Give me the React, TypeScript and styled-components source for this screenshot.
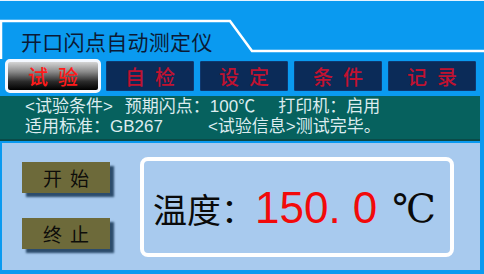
import React from "react";
import styled, { createGlobalStyle } from "styled-components";

const GlobalStyle = createGlobalStyle`
  body {
    margin: 0;
    background: #0a9af0;
  }
`;

const CJK = `"Noto Sans CJK SC", "DejaVu Sans", sans-serif`;

const Screen = styled.div`
  width: 484px;
  height: 274px;
  overflow: hidden;
  background: #0a9af0;
  border-top: 1px solid #e6f3ff;
  box-sizing: border-box;
  font-family: ${CJK};
  display: flex;
  flex-direction: column;
`;

const Header = styled.div`
  position: relative;
  height: 58px;
  padding: 26px 0 0 21px;
  box-sizing: border-box;
`;

const TabLine = styled.svg`
  position: absolute;
  left: 0;
  top: 0;
  pointer-events: none;
`;

const Title = styled.div`
  position: relative;
  font-size: 21px;
  line-height: 28px;
  color: #0b1a36;
  letter-spacing: 0.3px;
`;

const NavRow = styled.div`
  display: flex;
  align-items: center;
  gap: 5px;
  height: 34px;
  padding-left: 5px;
`;

const NavButton = styled.div<{ $active?: boolean }>`
  box-sizing: border-box;
  height: ${(p) => (p.$active ? "34px" : "30px")};
  width: ${(p) => (p.$active ? "96px" : "88px")};
  margin-right: ${(p) => (p.$active ? "0" : "1px")};
  display: flex;
  align-items: center;
  justify-content: center;
  font-size: 20px;
  font-weight: 500;
  letter-spacing: 10px;
  padding-left: 10px;
  color: ${(p) => (p.$active ? "#ff1a1a" : "#c01230")};
  background: ${(p) =>
    p.$active
      ? "linear-gradient(180deg, #d4d4d4 0%, #8a8a8a 35%, #2a2a2a 70%, #000 100%)"
      : "#0b2b58"};
  border: ${(p) => (p.$active ? "3px solid #f4f8ff" : "1px solid #0e3870")};
  border-radius: ${(p) => (p.$active ? "5px" : "1px")};
`;

const InfoBand = styled.div`
  margin-top: 3px;
  width: 480px;
  height: 45px;
  box-sizing: border-box;
  background: #06615e;
  border-bottom: 2px solid #0a4a48;
  padding: 1px 0 0 25px;
  color: #dcecef;
  font-family: "Liberation Sans", "Noto Sans CJK SC", sans-serif;
  font-size: 17px;
  line-height: 20px;
`;

const InfoLine = styled.div`
  display: flex;
  white-space: pre;
  height: 20px;
`;

const Field = styled.span<{ $gap?: number }>`
  display: inline-block;
  height: 20px;
  line-height: 20px;
  margin-left: ${(p) => p.$gap ?? 0}px;
`;

const Panel = styled.div`
  margin: 2px 0 0 2px;
  width: 478px;
  height: 127px;
  box-sizing: border-box;
  background: #a8caee;
  display: flex;
  align-items: flex-start;
  padding: 14px 0 0 20px;
`;

const ButtonColumn = styled.div`
  display: flex;
  flex-direction: column;
  gap: 25px;
  margin-top: 5px;
  flex-shrink: 0;
`;

const ActionButton = styled.div`
  width: 88px;
  height: 31px;
  background: #6d6a3a;
  color: #0d0d0a;
  font-size: 19px;
  display: flex;
  align-items: center;
  justify-content: center;
  letter-spacing: 8px;
  padding-left: 8px;
  box-sizing: border-box;
  box-shadow: 4px 4px 2px #2c4c6c;
`;

const Display = styled.div`
  margin-left: 30px;
  width: 314px;
  height: 100px;
  flex-shrink: 0;
  box-sizing: border-box;
  border: 4px solid #ffffff;
  border-radius: 8px;
  display: flex;
  align-items: center;
  padding-left: 9px;
  padding-top: 2px;
  white-space: nowrap;
`;

const Label = styled.span`
  font-family: "Noto Sans CJK SC", serif;
  font-size: 34px;
  color: #0a0a0a;
  flex-shrink: 0;
`;

const Value = styled.span`
  font-family: "Liberation Sans", Arial, sans-serif;
  font-size: 44px;
  color: #f20a0a;
  margin-left: 0;
  white-space: pre;
  flex-shrink: 0;
`;

const Unit = styled.span`
  font-family: "DejaVu Serif", "Liberation Serif", serif;
  font-size: 39px;
  color: #0a0a0a;
  margin-left: 15px;
  flex-shrink: 0;
`;

const navItems = ["试验", "自检", "设定", "条件", "记录"];

export default function App() {
  return (
    <>
      <GlobalStyle />
      <Screen>
        <Header>
          <TabLine width="484" height="58" viewBox="0 0 484 58">
            <polyline
              points="1,58 1,20 230,20 252,50 484,50"
              fill="none"
              stroke="#ffffff"
              strokeWidth="2.5"
            />
          </TabLine>
          <Title>开口闪点自动测定仪</Title>
        </Header>
        <NavRow>
          {navItems.map((t, i) => (
            <NavButton key={t} $active={i === 0}>
              {t}
            </NavButton>
          ))}
        </NavRow>
        <InfoBand>
          <InfoLine>
            <Field>&lt;试验条件&gt;</Field>
            <Field $gap={12}>预期闪点：100℃</Field>
            <Field $gap={23}>打印机：启用</Field>
          </InfoLine>
          <InfoLine>
            <Field>适用标准：GB267</Field>
            <Field $gap={45}>&lt;试验信息&gt;测试完毕。</Field>
          </InfoLine>
        </InfoBand>
        <Panel>
          <ButtonColumn>
            <ActionButton>开始</ActionButton>
            <ActionButton>终止</ActionButton>
          </ButtonColumn>
          <Display>
            <Label>温度：</Label>
            <Value>150. 0</Value>
            <Unit>℃</Unit>
          </Display>
        </Panel>
      </Screen>
    </>
  );
}
